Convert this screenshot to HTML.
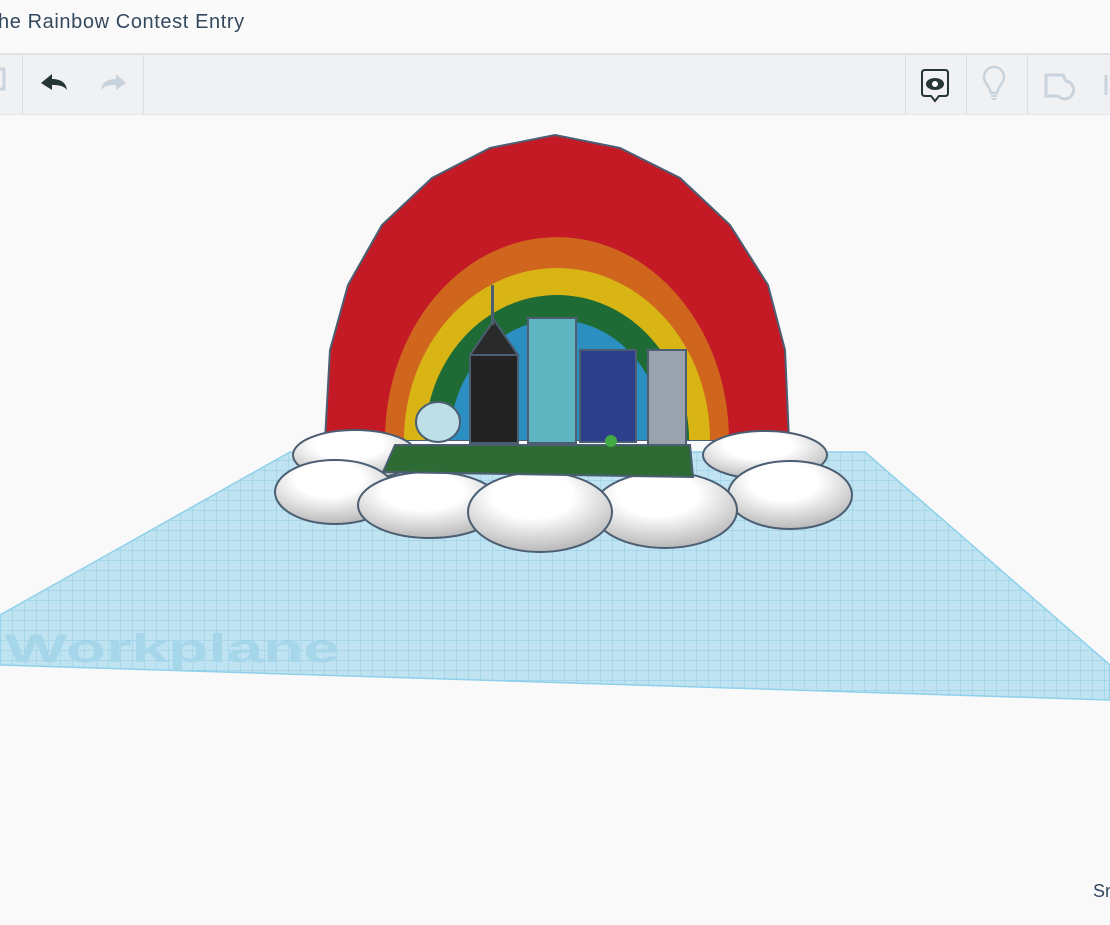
<!DOCTYPE html>
<html><head><style>
body{margin:0;width:1110px;height:925px;overflow:hidden;background:#f9f9fa;font-family:"Liberation Sans",sans-serif;position:relative}
.top{position:absolute;left:0;top:0;width:1110px;height:53px;background:#fafafa;border-bottom:2px solid #dfe2e7}
.top span{position:absolute;left:-2px;top:11px;font-size:20px;color:#34495e;letter-spacing:0.6px}
.bar{position:absolute;left:0;top:55px;width:1110px;height:59px;background:#f0f1f3;border-bottom:1px solid #e3e5e8}
.sep{position:absolute;top:0;width:1px;height:59px;background:#dcdfe3}
</style></head><body>
<div class="top"><span>he Rainbow Contest Entry</span></div>
<div class="bar">
<div class="sep" style="left:22px"></div><div class="sep" style="left:143px"></div>
<div class="sep" style="left:905px"></div><div class="sep" style="left:966px"></div><div class="sep" style="left:1027px"></div>
<svg width="1110" height="59" style="position:absolute;left:0;top:0">
<path d="M0 14h4v20h-4" fill="none" stroke="#c9d3dc" stroke-width="3"/>
<path d="M41 28l11-9v5c8 0 14 3 15 11c-3-4-8-5-15-5v5z" fill="#263535"/>
<path d="M126 28l-10-9v5c-8 0-14 3-15 11c3-4 8-5 15-5v5z" fill="#c9d3dc"/>
<path d="M925 15h20q3 0 3 3v20q0 3-3 3h-6l-4 5l-4-5h-6q-3 0-3-3v-20q0-3 3-3z" fill="none" stroke="#263535" stroke-width="2"/>
<ellipse cx="935" cy="29" rx="9" ry="6" fill="#263535"/><circle cx="935" cy="29" r="3" fill="#fff"/>
<path d="M991 38q-2-6-5-10a10 10 0 1 1 16 0q-3 4-5 10z" fill="none" stroke="#c9d3dc" stroke-width="2.5"/>
<path d="M991 41h6M992 44h4" stroke="#c9d3dc" stroke-width="2"/>
<path d="M1046 20h17l3 6a9 9 0 1 1-8 15h-12z" fill="none" stroke="#c9d3dc" stroke-width="3"/>
<path d="M1106 20v20" stroke="#c9d3dc" stroke-width="3"/>
</svg></div>
<svg width="1110" height="925" style="position:absolute;left:0;top:0">
<defs><pattern id="g" width="12" height="10" patternUnits="userSpaceOnUse"><path d="M12 0H0V10" fill="none" stroke="#7cc4df" stroke-width="0.7"/></pattern>
<radialGradient id="c" cx="0.45" cy="0.3" r="0.7"><stop offset="0.4" stop-color="#fff"/><stop offset="1" stop-color="#b9b9b9"/></radialGradient></defs>
<polygon points="290,452 865,452 1110,665 1110,700 0,665 0,615" fill="#bfe3f1"/>
<polygon points="290,452 865,452 1110,665 1110,700 0,665 0,615" fill="url(#g)" stroke="#8fd0ea" stroke-width="1.5"/>
<text x="5" y="662" font-size="40" font-weight="bold" fill="#a6d6ea" textLength="335" lengthAdjust="spacingAndGlyphs">Workplane</text>
<path d="M325 440L330 350L348 285L382 225L432 178L490 148L555 135L620 148L680 178L730 225L768 285L785 350L789 440Z" fill="#c41a26" stroke="#4b5e72" stroke-width="2"/>
<path d="M385 440A172 203 0 0 1 729 440Z" fill="#d0661e"/>
<path d="M404 440A153 172 0 0 1 710 440Z" fill="#d8b414"/>
<path d="M425 440A132 145 0 0 1 689 440Z" fill="#1f6b36"/>
<path d="M450 440A107 120 0 0 1 664 440Z" fill="#2c8fc2"/>
<ellipse cx="355" cy="455" rx="62" ry="25" fill="url(#c)" stroke="#4b5e72" stroke-width="2"/>
<ellipse cx="765" cy="455" rx="62" ry="24" fill="url(#c)" stroke="#4b5e72" stroke-width="2"/>
<ellipse cx="335" cy="492" rx="60" ry="32" fill="url(#c)" stroke="#4b5e72" stroke-width="2"/>
<ellipse cx="790" cy="495" rx="62" ry="34" fill="url(#c)" stroke="#4b5e72" stroke-width="2"/>
<ellipse cx="430" cy="505" rx="72" ry="33" fill="url(#c)" stroke="#4b5e72" stroke-width="2"/>
<ellipse cx="665" cy="510" rx="72" ry="38" fill="url(#c)" stroke="#4b5e72" stroke-width="2"/>
<ellipse cx="540" cy="512" rx="72" ry="40" fill="url(#c)" stroke="#4b5e72" stroke-width="2"/>
<polygon points="395,445 690,445 693,477 383,472" fill="#2e6a34" stroke="#4b5e72" stroke-width="2"/>
<rect x="470" y="355" width="48" height="88" fill="#222" stroke="#4b5e72" stroke-width="2"/>
<polygon points="470,355 494,320 518,355" fill="#2a2a2a" stroke="#4b5e72" stroke-width="2"/>
<rect x="491" y="285" width="3" height="40" fill="#4b5e72"/>
<rect x="528" y="318" width="48" height="125" fill="#5fb4bf" stroke="#4b5e72" stroke-width="2"/>
<rect x="580" y="350" width="56" height="92" fill="#2d3f8a" stroke="#4b5e72" stroke-width="2"/>
<rect x="648" y="350" width="38" height="95" fill="#9aa3ad" stroke="#4b5e72" stroke-width="2"/>
<ellipse cx="438" cy="422" rx="22" ry="20" fill="#bde0e6" stroke="#4b5e72" stroke-width="2"/>
<circle cx="611" cy="441" r="6" fill="#44aa44"/>
</svg>
<div style="position:absolute;left:1093px;top:881px;font-size:18px;color:#34495e">Sn</div>
</body></html>
